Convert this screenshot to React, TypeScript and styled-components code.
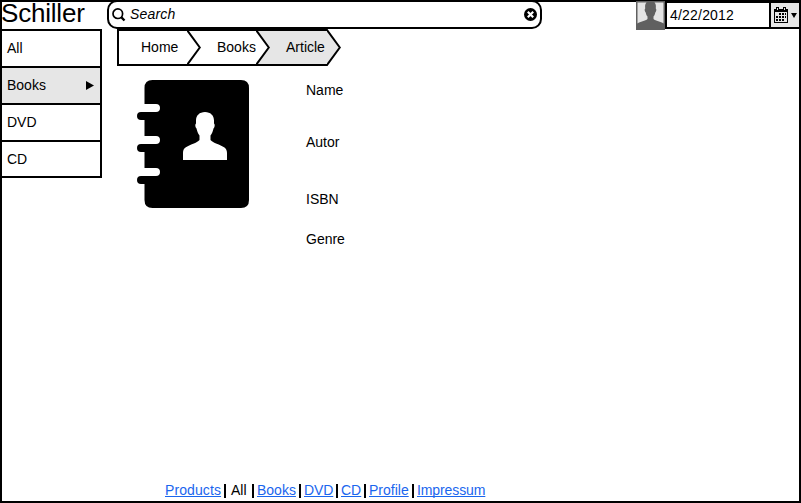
import React from "react";
import styled, { createGlobalStyle } from "styled-components";

const GlobalStyle = createGlobalStyle`
  *, *::before, *::after { box-sizing: border-box; }
  html, body { margin: 0; padding: 0; background: #fff; }
  svg { display: block; flex: none; }
`;

const Frame = styled.div`
  width: 801px;
  height: 503px;
  display: flex;
  flex-direction: column;
  border: 2px solid #000;
  background: #fff;
  color: #000;
  font-family: "Liberation Sans", Arial, sans-serif;
  font-size: 14px;
  line-height: 16px;
`;

const Header = styled.header`
  display: flex;
  align-items: flex-start;
  flex: none;
  height: 27px;
`;

const Logo = styled.div`
  width: 105px;
  margin-left: -1px;
  font-size: 26px;
  line-height: 26px;
  margin-top: -2px;
  letter-spacing: -0.2px;
  white-space: nowrap;
`;

const SearchBar = styled.label`
  display: flex;
  align-items: center;
  width: 435px;
  height: 29px;
  margin: -2px 0 0 1px;
  padding: 0 3px;
  border: 2px solid #000;
  border-radius: 10px;
`;

const SearchText = styled.span`
  flex: 1;
  margin: -2px 0 0 4px;
  font-style: italic;
  letter-spacing: 0.2px;
`;

const Account = styled.div`
  display: flex;
  align-items: flex-start;
  margin: -1px 0 0 auto;
`;

const DateField = styled.div`
  display: flex;
  width: 134px;
  height: 28px;
  border: 2px solid #000;
  border-right: 0;
`;

const DateValue = styled.span`
  flex: 1;
  padding: 4px 0 0 3px;
  letter-spacing: 0.2px;
`;

const DateButton = styled.button`
  display: flex;
  align-items: center;
  width: 30px;
  height: 24px;
  padding: 0 0 0 3px;
  gap: 3px;
  border: 0;
  border-left: 2px solid #000;
  background: #e6e6e6;
`;

const Body = styled.div`
  display: flex;
  flex: 1;
  min-height: 0;
`;

const Sidebar = styled.nav`
  width: 100px;
  height: 149px;
  display: flex;
  flex-direction: column;
  border: 2px solid #000;
  border-left: 0;
`;

const Category = styled.a<{ $active?: boolean }>`
  display: flex;
  align-items: flex-start;
  justify-content: space-between;
  height: 37px;
  padding: 9px 6px 0 5px;
  background: ${(p) => (p.$active ? "#e6e6e6" : "#fff")};
  border-bottom: 2px solid #000;
  svg { margin-top: 4px; }
  &:last-child { border-bottom: 0; height: 34px; }
`;

const Main = styled.main`
  flex: 1;
  margin-left: 15px;
`;

const Breadcrumbs = styled.nav`
  display: flex;
  height: 37px;
`;

const Crumb = styled.a<{ $width: number; $indent: number; $active?: boolean; $first?: boolean }>`
  width: ${(p) => p.$width}px;
  padding: 8px 0 0 ${(p) => p.$indent}px;
  border: solid #000;
  border-width: 2px 0 2px ${(p) => (p.$first ? "2px" : "0")};
  background: ${(p) => (p.$active ? "#e6e6e6" : "#fff")};
  white-space: nowrap;
`;

const Article = styled.article`
  display: flex;
  padding: 14px 0 0 20px;
`;

const Fields = styled.ul`
  list-style: none;
  margin: 2px 0 0 57px;
  padding: 0;
`;

const Field = styled.li<{ $height: number }>`
  height: ${(p) => p.$height}px;
`;

const Footer = styled.footer`
  display: flex;
  flex: none;
  height: 19px;
  padding-left: 163px;
`;

const FooterItem = styled.span<{ $width: number; $indent?: number; $plain?: boolean; $tracking?: number }>`
  width: ${(p) => p.$width}px;
  padding-left: ${(p) => p.$indent ?? 0}px;
  color: ${(p) => (p.$plain ? "#000" : "#1a66ee")};
  letter-spacing: ${(p) => p.$tracking ?? 0}px;
  text-decoration: ${(p) => (p.$plain ? "none" : "underline 1px #1a66ee")};
  text-decoration-skip-ink: none;
  text-underline-offset: 1px;
  white-space: nowrap;
`;

const Separator = styled.i`
  width: 2px;
  height: 14px;
  margin-top: 2px;
  background: #000;
`;

const PERSON =
  "M22 0C16.500 0 13 3.500 13 8.500V11.500C12 12 12 15 13.500 16.500C14 19 15 21.500 16.500 23.500V28C14 31 7 32.500 2.500 35.500C.7 36.700 0 38.500 0 41V48H44V41C44 38.500 43 36.700 41.500 35.500C37 32.500 30 31 27.500 28V23.500C29 21.500 30 19 30.500 16.500C32 15 32 12 31 11.500V8.500C31 3.500 27.500 0 22 0Z";

const SearchIcon = () => (
  <svg width="14" height="14" viewBox="0 0 14 14" fill="none" stroke="#000">
    <circle cx="5.800" cy="5.700" r="4.800" strokeWidth="1.700" />
    <path d="M9.200 9.200L12.500 12.500" strokeWidth="2.400" />
  </svg>
);

const ClearIcon = () => (
  <svg width="13" height="13" viewBox="0 0 13 13">
    <circle cx="6.500" cy="6.500" r="6.500" />
    <path d="M3.800 3.800L9.200 9.200M9.200 3.800L3.800 9.200" stroke="#fff" strokeWidth="2.200" />
  </svg>
);

const Avatar = () => (
  <svg width="29" height="29" viewBox="0 0 29 29">
    <path fill="#606060" d="M0 0H29V29H0Z" />
    <path
      fill="#e4e4e4"
      d="M1.500 1.500H10.500C9 3 9 4.500 9.200 7.500C8.300 8 8.600 10.500 9.700 11.500C10 13 10.500 14.500 11.500 15.500V18C9.500 20 4 20.500 1.500 22.500Z"
    />
    <path
      fill="#e4e4e4"
      d="M27.500 1.500H18.500C20 3 20 4.500 19.800 7.500C20.700 8 20.400 10.500 19.300 11.500C19 13 18.500 14.500 17.500 15.500V18C19.500 20 25 20.500 27.500 22.500Z"
    />
  </svg>
);

const CalendarIcon = () => (
  <svg width="14" height="16" viewBox="0 0 14 16" shapeRendering="crispEdges">
    <path d="M0 2H2V0H5V2H9V0H12V2H14V16H0Z" />
    <path fill="#e6e6e6" d="M3 1H4V3H3ZM10 1H11V3H10ZM1 5H13V15H1Z" />
    <path
      d="M5 6H7V8H5ZM8 6H10V8H8ZM11 6H12V8H11ZM2 9H4V11H2ZM5 9H7V11H5ZM8 9H10V11H8ZM11 9H12V11H11ZM2 12H4V14H2ZM5 12H7V14H5ZM8 12H10V14H8Z"
    />
  </svg>
);

const Chevron = ({ left, right, last }: { left: string; right: string; last?: boolean }) => (
  <svg width="14" height="37" viewBox="0 0 14 37">
    <path fill={right} d="M0 0H14V37H0Z" />
    {!last && <path d="M0 0H14V2H0ZM0 35H14V37H0Z" />}
    <path fill={left} d="M0 2L13 18.500L0 35Z" />
    <path fill="none" stroke="#000" strokeWidth="2" d="M-1 1H0L12.800 18.500L0 36H-1" />
  </svg>
);

const ContactBook = () => (
  <svg width="112" height="128" viewBox="0 0 112 128">
    <path d="M15.500 0H104Q112 0 112 8V120Q112 128 104 128H15.500Q7.500 128 7.500 120V104H4A4 4 0 0 1 4 96H7.500V72H4A4 4 0 0 1 4 64H7.500V40H4A4 4 0 0 1 4 32H7.500V8Q7.500 0 15.500 0Z" />
    <path
      fill="#fff"
      d="M7 24H19A4 4 0 0 1 19 32H7ZM7 56H19A4 4 0 0 1 19 64H7ZM7 88H19A4 4 0 0 1 19 96H7Z"
    />
    <path fill="#fff" transform="translate(46 32)" d={PERSON} />
  </svg>
);

export default function App() {
  return (
    <>
      <GlobalStyle />
      <Frame>
        <Header>
          <Logo>Schiller</Logo>
          <SearchBar>
            <SearchIcon />
            <SearchText>Search</SearchText>
            <ClearIcon />
          </SearchBar>
          <Account>
            <Avatar />
            <DateField>
              <DateValue>4/22/2012</DateValue>
              <DateButton aria-label="Choose date">
                <CalendarIcon />
                <svg width="6" height="5" viewBox="0 0 6 5">
                  <path d="M0 0H6L3 5Z" />
                </svg>
              </DateButton>
            </DateField>
          </Account>
        </Header>
        <Body>
          <Sidebar>
            <Category>All</Category>
            <Category $active>
              Books
              <svg width="8" height="9" viewBox="0 0 8 9">
                <path d="M0 0L8 4.500L0 9Z" />
              </svg>
            </Category>
            <Category>DVD</Category>
            <Category>CD</Category>
          </Sidebar>
          <Main>
            <Breadcrumbs>
              <Crumb $first $width={70} $indent={22}>Home</Crumb>
              <Chevron left="#fff" right="#fff" />
              <Crumb $width={55} $indent={16}>Books</Crumb>
              <Chevron left="#fff" right="#e6e6e6" />
              <Crumb $active $width={57} $indent={16}>Article</Crumb>
              <Chevron left="#e6e6e6" right="#fff" last />
            </Breadcrumbs>
            <Article>
              <ContactBook />
              <Fields>
                <Field $height={52}>Name</Field>
                <Field $height={57}>Autor</Field>
                <Field $height={40}>ISBN</Field>
                <Field $height={16}>Genre</Field>
              </Fields>
            </Article>
          </Main>
        </Body>
        <Footer>
          <FooterItem $width={59} $tracking={0.1}>Products</FooterItem>
          <Separator />
          <FooterItem $plain $width={26} $indent={5}>All</FooterItem>
          <Separator />
          <FooterItem $width={45} $indent={3}>Books</FooterItem>
          <Separator />
          <FooterItem $width={35} $indent={3} $tracking={-0.1}>DVD</FooterItem>
          <Separator />
          <FooterItem $width={26} $indent={3}>CD</FooterItem>
          <Separator />
          <FooterItem $width={46} $indent={3}>Profile</FooterItem>
          <Separator />
          <FooterItem $width={72} $indent={3} $tracking={-0.1}>Impressum</FooterItem>
        </Footer>
      </Frame>
    </>
  );
}
